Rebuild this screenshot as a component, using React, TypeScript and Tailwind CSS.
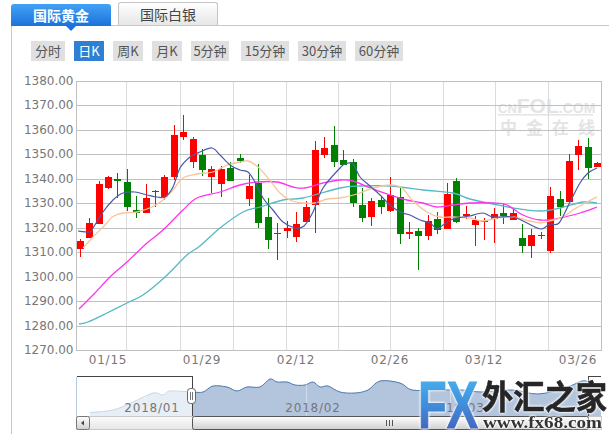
import React from "react";

type C = [number, number, number, number, number]; // high, top, bottom, low, up(1 red / 0 green)
const candles: C[] = [
  [239,241,249,257,1],[218,223,238,238,1],[181,184,224,224,1],[176,177,188,189,1],[173,179,181,198,0],
  [169,182,207,211,0],[196,210,213,218,0],[184,198,213,213,1],[190,191,192,207,0],[175,177,197,200,1],
  [125,135,177,180,1],[115,132,137,140,1],[137,139,162,168,1],[149,155,170,176,0],[166,169,177,193,1],
  [166,169,184,197,1],[162,168,181,181,0],[154,158,161,163,0],[175,186,199,206,1],[164,183,223,228,0],
  [198,217,240,249,0],[223,233,234,260,0],[221,228,231,238,1],[212,224,237,242,1],[201,207,222,222,1],
  [141,150,205,233,1],[137,148,155,158,1],[126,145,162,167,0],[150,160,165,165,0],[159,162,203,207,0],
  [188,205,218,222,0],[198,201,217,226,1],[197,200,207,214,0],[177,195,211,212,1],[187,197,234,244,0],
  [222,232,234,239,1],[228,231,236,270,0],[215,221,236,240,1],[212,219,230,234,0],[183,194,229,229,1],
  [178,181,222,223,0],[206,214,216,219,1],[216,220,225,246,1],[218,221,222,240,1],[208,214,219,243,1],
  [204,213,216,224,0],[209,213,220,220,1],[224,238,246,253,0],[229,235,246,258,1],[232,235,236,239,1],
  [187,196,251,253,1],[191,199,207,216,0],[154,161,202,202,1],[140,146,155,170,1],[138,147,168,179,0],
  [162,163,167,167,1],
];

const ma5 = "78,231 90,232 93,228 103,212 113,200 123,193 135,192 147,195 157,197 165,197 173,187 180,168 190,157 200,152 212,148 220,155 230,165 240,170 248,172 255,182 263,198 273,210 283,222 295,228 304,226 313,212 323,188 340,168 345,164 353,164 360,177 370,186 380,195 390,205 400,212 410,215 420,220 430,223 437,229 443,225 453,219 463,217 470,216 483,213 493,217 513,217 527,223 541,229 550,224 559,223 570,202 580,183 588,173 597,168";
const ma10 = "83,248 92,238 107,223 112,217 123,213 137,212 152,207 163,200 173,190 183,178 197,174 213,172 227,165 240,162 248,161 258,167 268,178 280,193 290,200 303,203 315,203 327,199 340,198 357,194 373,188 390,185 402,188 412,200 427,212 440,217 453,217 470,218 483,221 497,218 513,217 530,221 541,223 553,220 563,217 573,210 587,202 597,197";
const ma20 = "79,309 93,295 110,277 127,262 147,243 163,230 183,210 197,198 220,192 240,185 257,182 277,182 293,187 305,188 323,183 340,180 353,181 373,189 390,195 407,200 423,203 437,207 453,205 470,203 493,203 507,205 523,215 540,220 560,218 580,213 597,207";
const ma30 = "79,324 88,322 107,313 127,303 143,295 165,277 187,255 200,246 220,228 243,212 260,207 283,200 303,198 340,188 360,186 390,186 423,190 453,193 470,199 493,204 513,208 540,211 560,208 583,202 597,203";
const navPts = "90,412.5 113,410 133,402 153,393 163,395 170,391 192,392 203,392 213,386 227,387 237,391 247,387 260,387 270,379 277,382 287,382 295,385 305,385 313,382 320,387 328,386 340,392 355,393 368,390 380,381 400,383 412,390 435,390 462,390 482,392 512,390 538,394 565,388 582,381 588,382";

function smooth(s: string) {
  const p = s.split(" ").map((q) => q.split(",").map(Number));
  let d = `M${p[0][0]} ${p[0][1]}`;
  for (let i = 0; i < p.length - 1; i++) {
    const a = p[Math.max(i - 1, 0)], b = p[i], c = p[i + 1], e = p[Math.min(i + 2, p.length - 1)];
    const c1 = [b[0] + (c[0] - a[0]) / 6, b[1] + (c[1] - a[1]) / 6];
    const c2 = [c[0] - (e[0] - b[0]) / 6, c[1] - (e[1] - b[1]) / 6];
    d += `C${c1[0].toFixed(1)} ${c1[1].toFixed(1)} ${c2[0].toFixed(1)} ${c2[1].toFixed(1)} ${c[0]} ${c[1]}`;
  }
  return d;
}

const yLabels = ["1380.00","1370.00","1360.00","1350.00","1340.00","1330.00","1320.00","1310.00","1300.00","1290.00","1280.00","1270.00"];
const xLabels: [string, number][] = [["01/15",108],["01/29",202],["02/12",296],["02/26",390],["03/12",484],["03/26",578]];
const vLines = [126.5,180.5,233.5,286.5,338.5,390.5,443.5,495.5,548.5];
const lineY = (i: number) => Math.round(81 + 24.45 * i) + 0.5;

const periods = [
  { t: "分时", w: "w-[34px]" },
  { t: "日K", w: "w-[30px]", on: true },
  { t: "周K", w: "w-[30px]" },
  { t: "月K", w: "w-[30px]" },
  { t: "5分钟", w: "w-[38px]" },
  { t: "15分钟", w: "w-[48px] ml-[3px]" },
  { t: "30分钟", w: "w-[48px]" },
  { t: "60分钟", w: "w-[48px]" },
];

function Chart() {
  const axis = "'DejaVu Sans', sans-serif";
  const nav = smooth(navPts);
  return (
    <svg viewBox="12 70 597 364" width={597} height={364} className="block">
      <defs>
        <linearGradient id="fx" x1="0" y1="0" x2="0" y2="1">
          <stop offset="0" stopColor="#4bbcf2" />
          <stop offset="0.5" stopColor="#3f8fdc" />
          <stop offset="1" stopColor="#4a50ac" />
        </linearGradient>
        <linearGradient id="bar" x1="0" y1="0" x2="0" y2="1">
          <stop offset="0" stopColor="#ffffff" />
          <stop offset="1" stopColor="#cfcfcf" />
        </linearGradient>
        <linearGradient id="track" x1="0" y1="0" x2="0" y2="1">
          <stop offset="0" stopColor="#fbfbfb" />
          <stop offset="1" stopColor="#e6e6e6" />
        </linearGradient>
      </defs>

      {/* watermark */}
      <g fill="#e4e4e4" fontFamily="'Liberation Sans', sans-serif" fontWeight={700}>
        <text x={498} y={113}>
          <tspan fontSize={13}>CN</tspan>
          <tspan fontSize={21}>FOL</tspan>
          <tspan fontSize={14}>.COM</tspan>
        </text>
        <rect x={498} y={114} width={95} height={1.5} />
        <text x={500} y={134} fontSize={17} letterSpacing={9} fontFamily="'Noto Sans CJK SC', sans-serif">中金在线</text>
      </g>

      {/* grid */}
      {vLines.map((x) => (
        <line key={x} x1={x} x2={x} y1={81} y2={350} stroke="#dcdcdc" shapeRendering="crispEdges" />
      ))}
      {yLabels.map((l, i) => (
        <line key={l} x1={76} x2={601} y1={lineY(i)} y2={lineY(i)} stroke="#c0c0c0" shapeRendering="crispEdges" />
      ))}
      <line x1={76.5} x2={76.5} y1={81} y2={351} stroke="#c0c0c0" shapeRendering="crispEdges" />
      <line x1={601.5} x2={601.5} y1={81} y2={351} stroke="#c0c0c0" shapeRendering="crispEdges" />

      {yLabels.map((l, i) => (
        <text key={l} x={73.5} y={lineY(i) + 3} textAnchor="end" fontSize={12} fill="#777" fontFamily={axis}>{l}</text>
      ))}
      {xLabels.map(([l, x]) => (
        <text key={l} x={x} y={364} textAnchor="middle" fontSize={12} letterSpacing={0.8} fill="#777" fontFamily={axis}>{l}</text>
      ))}

      {/* candles */}
      {candles.map(([h, t, b, l, up], i) => {
        const cx = Math.round(79.7 + 9.41 * i);
        const col = up ? "#ff0000" : "#008000";
        return (
          <g key={i} shapeRendering="crispEdges">
            <rect x={cx - 0.5} y={h} width={1} height={l - h} fill={col} />
            <rect x={cx - 3.5} y={t} width={7} height={Math.max(b - t, 1)} fill={col} />
          </g>
        );
      })}

      {/* moving averages */}
      <path d={smooth(ma30)} fill="none" stroke="#55b9c4" strokeWidth={1.3} />
      <path d={smooth(ma20)} fill="none" stroke="#ff33ee" strokeWidth={1.3} />
      <path d={smooth(ma10)} fill="none" stroke="#f8c49a" strokeWidth={1.3} />
      <path d={smooth(ma5)} fill="none" stroke="#4a5aa8" strokeWidth={1.2} />

      {/* navigator */}
      <path d={`${nav}L601 388L601 416L90 416Z`} fill="#b3c5dd" />
      <path d={nav} fill="none" stroke="#4a77ae" strokeWidth={1} />
      <rect x={77} y={377} width={115} height={39} fill="#ffffff" fillOpacity={0.7} />
      {[145.5,306.5,450.5].map((x) => (
        <line key={x} x1={x} x2={x} y1={377} y2={416} stroke="#ffffff" strokeOpacity={0.4} />
      ))}
      <text x={152} y={412} textAnchor="middle" fontSize={12} letterSpacing={0.8} fill="#777" fontFamily={axis}>2018/01</text>
      <text x={313} y={412} textAnchor="middle" fontSize={12} letterSpacing={0.8} fill="#777" fontFamily={axis}>2018/02</text>
      <text x={457} y={412} textAnchor="middle" fontSize={12} letterSpacing={0.8} fill="#777" fontFamily={axis}>2018/03</text>
      <path d="M76.5 376.5H192.5V416" fill="none" stroke="#444" strokeWidth={1} shapeRendering="crispEdges" />
      <line x1={76.5} x2={76.5} y1={377} y2={416} stroke="#b9cbe0" shapeRendering="crispEdges" />
      <path d="M588.5 416V376.5H601" fill="none" stroke="#444" strokeWidth={1} shapeRendering="crispEdges" />

      {/* scrollbar */}
      <rect x={76.5} y={416.5} width={525} height={13} fill="url(#track)" stroke="#c8c8c8" shapeRendering="crispEdges" />
      <rect x={192.5} y={416.5} width={396} height={13} rx={2} fill="url(#bar)" stroke="#555" />
      <rect x={76.5} y={416.5} width={13} height={13} rx={2} fill="url(#bar)" stroke="#777" />
      <path d="M81 423l3-2.5v5z" fill="#444" />
      <path d="M386.5 420v6M389.5 420v6M392.5 420v6" stroke="#555" fill="none" shapeRendering="crispEdges" />
      <rect x={187.5} y={388.5} width={8} height={15} rx={3} fill="#fff" stroke="#666" />
      <path d="M190.5 392v8M192.5 392v8" stroke="#777" fill="none" shapeRendering="crispEdges" />

      {/* fx68 logo */}
      <g className="[filter:drop-shadow(0_0_1px_#fff)_drop-shadow(0_0_1px_#fff)]">
        <text x={418} y={428} fontSize={67} fontWeight={700} fontFamily="'Liberation Sans', sans-serif" textLength={60} lengthAdjust="spacingAndGlyphs" fill="url(#fx)" stroke="url(#fx)" strokeWidth={1}>FX</text>
        <text x={482} y={409} fontSize={33} fontWeight={700} fontFamily="'Noto Sans CJK SC', sans-serif" textLength={125} lengthAdjust="spacingAndGlyphs" fill="#262626" stroke="#262626" strokeWidth={0.6}>外汇之家</text>
        <text x={483} y={428} fontSize={16} fontWeight={700} fontFamily="'Liberation Serif', serif" textLength={119} lengthAdjust="spacingAndGlyphs" fill="#333">www.fx68.com</text>
      </g>
    </svg>
  );
}

export default function App() {
  return (
    <div className="w-[609px] h-[434px] overflow-hidden bg-white font-['Noto_Sans_CJK_SC',sans-serif]">
      <div className="flex items-end h-[26px] pl-[11px] gap-[7px]">
        <div className="relative z-10 w-[100px] h-[22px] rounded-t-[3px] bg-gradient-to-b from-[#42a2f6] to-[#1d72da] text-white text-[14px] font-bold leading-[22px] text-center">
          国际黄金
          <span className="absolute left-[55px] top-[22px] w-0 h-0 border-x-[5px] border-x-transparent border-t-[5px] border-t-[#1d72da]" />
        </div>
        <div className="w-[100px] h-[23px] mb-px rounded-t-[3px] border border-b-0 border-[#c4c4c4] bg-gradient-to-b from-white to-[#e6e6e6] text-[#444] text-[14px] leading-[22px] text-center">
          国际白银
        </div>
      </div>
      <div className="ml-[11px] -mt-px border-l border-t border-[#c8c8c8] h-[409px]">
        <div className="flex gap-[9px] pt-[15px] pl-[19px]">
          {periods.map((p) => (
            <div
              key={p.t}
              className={
                p.w + " h-[20px] text-center text-[13px] leading-[20px] " +
                (p.on ? "bg-[#2f7fd3] text-white" : "bg-[#e0e0e0] text-[#555]")
              }
            >
              {p.t}
            </div>
          ))}
        </div>
        <div className="mt-[9px]">
          <Chart />
        </div>
      </div>
    </div>
  );
}
